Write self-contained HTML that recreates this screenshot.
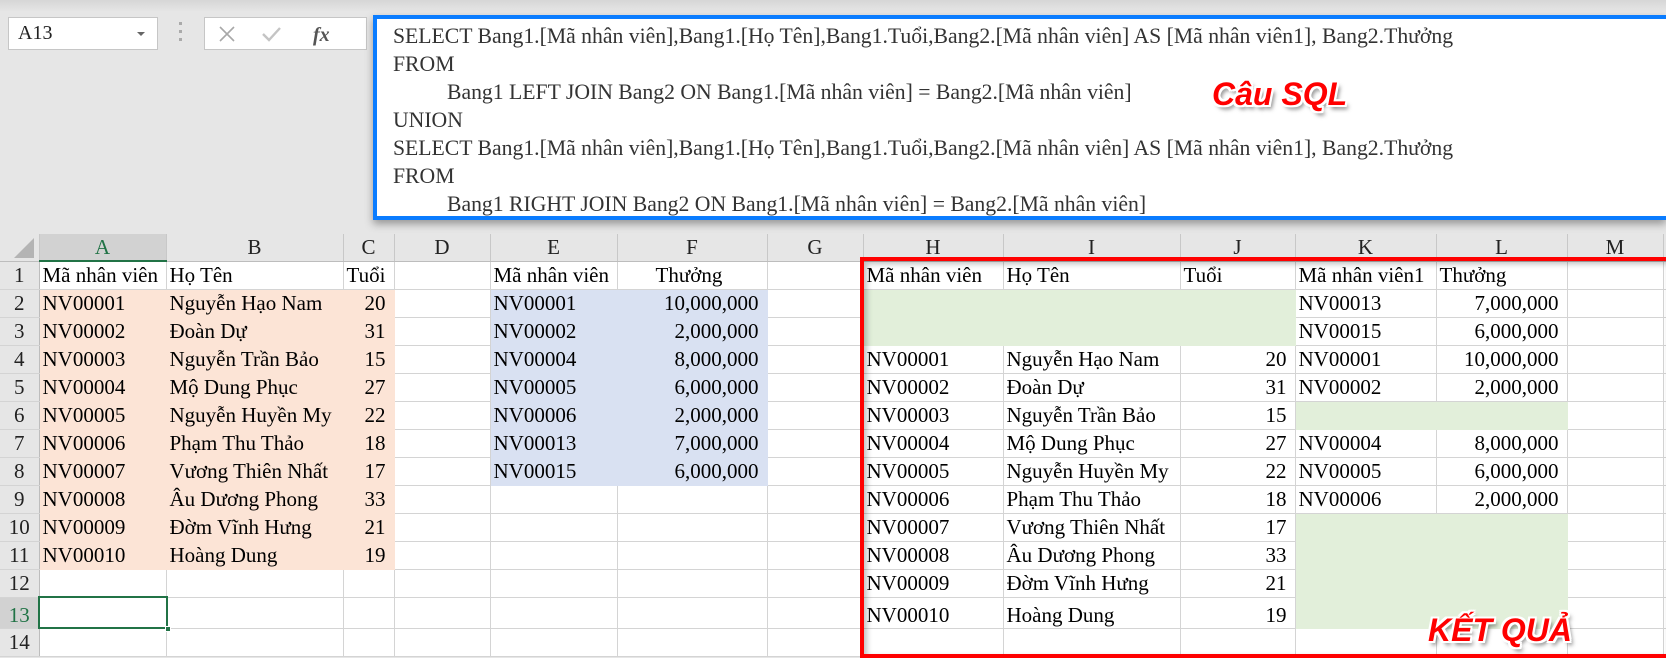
<!DOCTYPE html>
<html><head><meta charset="utf-8">
<style>
*{margin:0;padding:0;box-sizing:border-box}
body{width:1666px;height:658px;overflow:hidden;background:#e6e6e6;position:relative;font-family:"Liberation Serif",serif;color:#000}
.top{position:absolute;left:0;top:0;width:1666px;height:12px;background:linear-gradient(#d6d6d6,#e6e6e6)}
.namebox{position:absolute;left:8px;top:17px;width:150px;height:33px;background:#fff;border:1px solid #c6c6c6;font-size:20px;padding:4px 0 0 9px;color:#222}
.namebox .dd{position:absolute;right:12px;top:14px;width:0;height:0;border-left:4px solid transparent;border-right:4px solid transparent;border-top:4px solid #666}
.dots{position:absolute;left:179px;top:22px;width:4px;height:24px}
.dots i{display:block;width:3px;height:3px;background:#aaa;margin-bottom:5px}
.fbox{position:absolute;left:204px;top:17px;width:163px;height:33px;background:#fff;border:1px solid #c6c6c6}
.sql{position:absolute;left:373px;top:15px;width:1293px;height:205px;background:#fff;border:4px solid #0a7cff;border-right:none;box-shadow:0 4px 8px rgba(0,0,0,.35)}
.sql div{position:absolute;left:16px;font-size:21.7px;line-height:28px;color:#333;white-space:nowrap}
.lbl{position:absolute;font-family:"Liberation Sans",sans-serif;font-weight:bold;font-style:italic;color:#f00;font-size:32px;text-shadow:2px 0 0 #fff,-2px 0 0 #fff,0 2px 0 #fff,0 -2px 0 #fff,2px 2px 0 #fff,-2px -2px 0 #fff,2px -2px 0 #fff,-2px 2px 0 #fff,3px 4px 4px rgba(0,0,0,.5);white-space:nowrap}
table{position:absolute;left:0;top:234px;border-collapse:collapse;table-layout:fixed;width:1666px;font-size:21px}
td{border-right:1px solid #d4d4d4;border-bottom:1px solid #d4d4d4;height:28px;padding:0 3px;white-space:nowrap;overflow:hidden;line-height:26px;background:#fff}
tr.h td{background:#e6e6e6;height:27px;text-align:center;border-right:1px solid #c8c8c8;border-bottom:1px solid #bdbdbd;color:#222}
td.rh{background:#e6e6e6;text-align:center;padding:0;border-right:1px solid #bdbdbd;color:#222}
.r{text-align:right;padding-right:8px}
.p{background:#fce4d6;border-color:#fce4d6}.b{background:#d9e1f2;border-color:#d9e1f2}.g{background:#e2efda;border-color:#e2efda}
.red{position:absolute;left:860px;top:257px;width:806px;height:401px;border:4px solid #f00;border-right:none;box-shadow:inset 3px 3px 6px rgba(0,0,0,.25)}
.sel{position:absolute;left:38px;top:596px;width:130px;height:33px;border:2px solid #217346}
.sel i{position:absolute;right:-5px;bottom:-5px;width:6px;height:6px;background:#217346;border:1px solid #fff}
</style></head><body>
<div class="top"></div>
<div class="namebox">A13<span class="dd"></span></div>
<div class="dots"><i></i><i></i><i></i></div>
<div class="fbox">
<svg width="163" height="33" style="position:absolute;left:0;top:0">
<path d="M15 9 L29 23 M29 9 L15 23" stroke="#a8a8a8" stroke-width="1.6" fill="none"/>
<path d="M58 16 L64 22 L75 10" stroke="#c4c4c4" stroke-width="2.4" fill="none"/>
<text x="108" y="23" font-family="Liberation Serif" font-style="italic" font-weight="bold" font-size="20" fill="#555">fx</text>
</svg></div>
<div class="sql">
<div style="top:3px">SELECT Bang1.[Mã nhân viên],Bang1.[Họ Tên],Bang1.Tuổi,Bang2.[Mã nhân viên] AS [Mã nhân viên1], Bang2.Thưởng</div>
<div style="top:31px">FROM</div>
<div style="top:59px;left:70px">Bang1 LEFT JOIN Bang2 ON Bang1.[Mã nhân viên] = Bang2.[Mã nhân viên]</div>
<div style="top:87px">UNION</div>
<div style="top:115px">SELECT Bang1.[Mã nhân viên],Bang1.[Họ Tên],Bang1.Tuổi,Bang2.[Mã nhân viên] AS [Mã nhân viên1], Bang2.Thưởng</div>
<div style="top:143px">FROM</div>
<div style="top:171px;left:70px">Bang1 RIGHT JOIN Bang2 ON Bang1.[Mã nhân viên] = Bang2.[Mã nhân viên]</div>
</div>
<table>
<colgroup><col style="width:39px"><col style="width:127px"><col style="width:177px"><col style="width:51px"><col style="width:96px"><col style="width:127px"><col style="width:150px"><col style="width:96px"><col style="width:140px"><col style="width:177px"><col style="width:115px"><col style="width:141px"><col style="width:131px"><col style="width:96px"><col style="width:3px"></colgroup>
<tr class="h"><td style="background:#e6e6e6;position:relative"><svg width="30" height="24" style="position:absolute;left:6px;top:2px"><path d="M28 2 L28 22 L8 22 Z" fill="#b4b4b4"/></svg></td><td style="background:#d2d2d2;color:#217346;border-bottom:2px solid #217346">A</td><td>B</td><td>C</td><td>D</td><td>E</td><td>F</td><td>G</td><td>H</td><td>I</td><td>J</td><td>K</td><td>L</td><td>M</td><td></td></tr>
<tr><td class="rh">1</td><td>Mã nhân viên</td><td>Họ Tên</td><td>Tuổi</td><td></td><td>Mã nhân viên</td><td style="padding-left:38px">Thưởng</td><td></td><td>Mã nhân viên</td><td>Họ Tên</td><td>Tuổi</td><td>Mã nhân viên1</td><td>Thưởng</td><td></td><td></td></tr>
<tr><td class="rh">2</td><td class="p">NV00001</td><td class="p">Nguyễn Hạo Nam</td><td class="p r">20</td><td></td><td class="b">NV00001</td><td class="b r">10,000,000</td><td></td><td class="g"></td><td class="g"></td><td class="g"></td><td>NV00013</td><td class="r">7,000,000</td><td></td><td></td></tr>
<tr><td class="rh">3</td><td class="p">NV00002</td><td class="p">Đoàn Dự</td><td class="p r">31</td><td></td><td class="b">NV00002</td><td class="b r">2,000,000</td><td></td><td class="g"></td><td class="g"></td><td class="g"></td><td>NV00015</td><td class="r">6,000,000</td><td></td><td></td></tr>
<tr><td class="rh">4</td><td class="p">NV00003</td><td class="p">Nguyễn Trần Bảo</td><td class="p r">15</td><td></td><td class="b">NV00004</td><td class="b r">8,000,000</td><td></td><td>NV00001</td><td>Nguyễn Hạo Nam</td><td class="r">20</td><td>NV00001</td><td class="r">10,000,000</td><td></td><td></td></tr>
<tr><td class="rh">5</td><td class="p">NV00004</td><td class="p">Mộ Dung Phục</td><td class="p r">27</td><td></td><td class="b">NV00005</td><td class="b r">6,000,000</td><td></td><td>NV00002</td><td>Đoàn Dự</td><td class="r">31</td><td>NV00002</td><td class="r">2,000,000</td><td></td><td></td></tr>
<tr><td class="rh">6</td><td class="p">NV00005</td><td class="p">Nguyễn Huyền My</td><td class="p r">22</td><td></td><td class="b">NV00006</td><td class="b r">2,000,000</td><td></td><td>NV00003</td><td>Nguyễn Trần Bảo</td><td class="r">15</td><td class="g"></td><td class="g"></td><td></td><td></td></tr>
<tr><td class="rh">7</td><td class="p">NV00006</td><td class="p">Phạm Thu Thảo</td><td class="p r">18</td><td></td><td class="b">NV00013</td><td class="b r">7,000,000</td><td></td><td>NV00004</td><td>Mộ Dung Phục</td><td class="r">27</td><td>NV00004</td><td class="r">8,000,000</td><td></td><td></td></tr>
<tr><td class="rh">8</td><td class="p">NV00007</td><td class="p">Vương Thiên Nhất</td><td class="p r">17</td><td></td><td class="b">NV00015</td><td class="b r">6,000,000</td><td></td><td>NV00005</td><td>Nguyễn Huyền My</td><td class="r">22</td><td>NV00005</td><td class="r">6,000,000</td><td></td><td></td></tr>
<tr><td class="rh">9</td><td class="p">NV00008</td><td class="p">Âu Dương Phong</td><td class="p r">33</td><td></td><td></td><td></td><td></td><td>NV00006</td><td>Phạm Thu Thảo</td><td class="r">18</td><td>NV00006</td><td class="r">2,000,000</td><td></td><td></td></tr>
<tr><td class="rh">10</td><td class="p">NV00009</td><td class="p">Đờm Vĩnh Hưng</td><td class="p r">21</td><td></td><td></td><td></td><td></td><td>NV00007</td><td>Vương Thiên Nhất</td><td class="r">17</td><td class="g"></td><td class="g"></td><td></td><td></td></tr>
<tr><td class="rh">11</td><td class="p">NV00010</td><td class="p">Hoàng Dung</td><td class="p r">19</td><td></td><td></td><td></td><td></td><td>NV00008</td><td>Âu Dương Phong</td><td class="r">33</td><td class="g"></td><td class="g"></td><td></td><td></td></tr>
<tr><td class="rh">12</td><td></td><td></td><td></td><td></td><td></td><td></td><td></td><td>NV00009</td><td>Đờm Vĩnh Hưng</td><td class="r">21</td><td class="g"></td><td class="g"></td><td></td><td></td></tr>
<tr style="height:31px"><td class="rh" style="height:31px;background:#d2d2d2;color:#217346;vertical-align:bottom">13</td><td></td><td></td><td></td><td></td><td></td><td></td><td></td><td style="vertical-align:bottom">NV00010</td><td style="vertical-align:bottom">Hoàng Dung</td><td class="r" style="vertical-align:bottom">19</td><td class="g"></td><td class="g"></td><td></td><td></td></tr>
<tr><td class="rh">14</td><td></td><td></td><td></td><td></td><td></td><td></td><td></td><td></td><td></td><td></td><td></td><td></td><td></td><td></td></tr>
</table>
<div class="red"></div>
<div class="sel"><i></i></div>
<div class="lbl" style="left:1212px;top:76px">Câu SQL</div>
<div class="lbl" style="left:1428px;top:612px">KẾT QUẢ</div>
</body></html>
